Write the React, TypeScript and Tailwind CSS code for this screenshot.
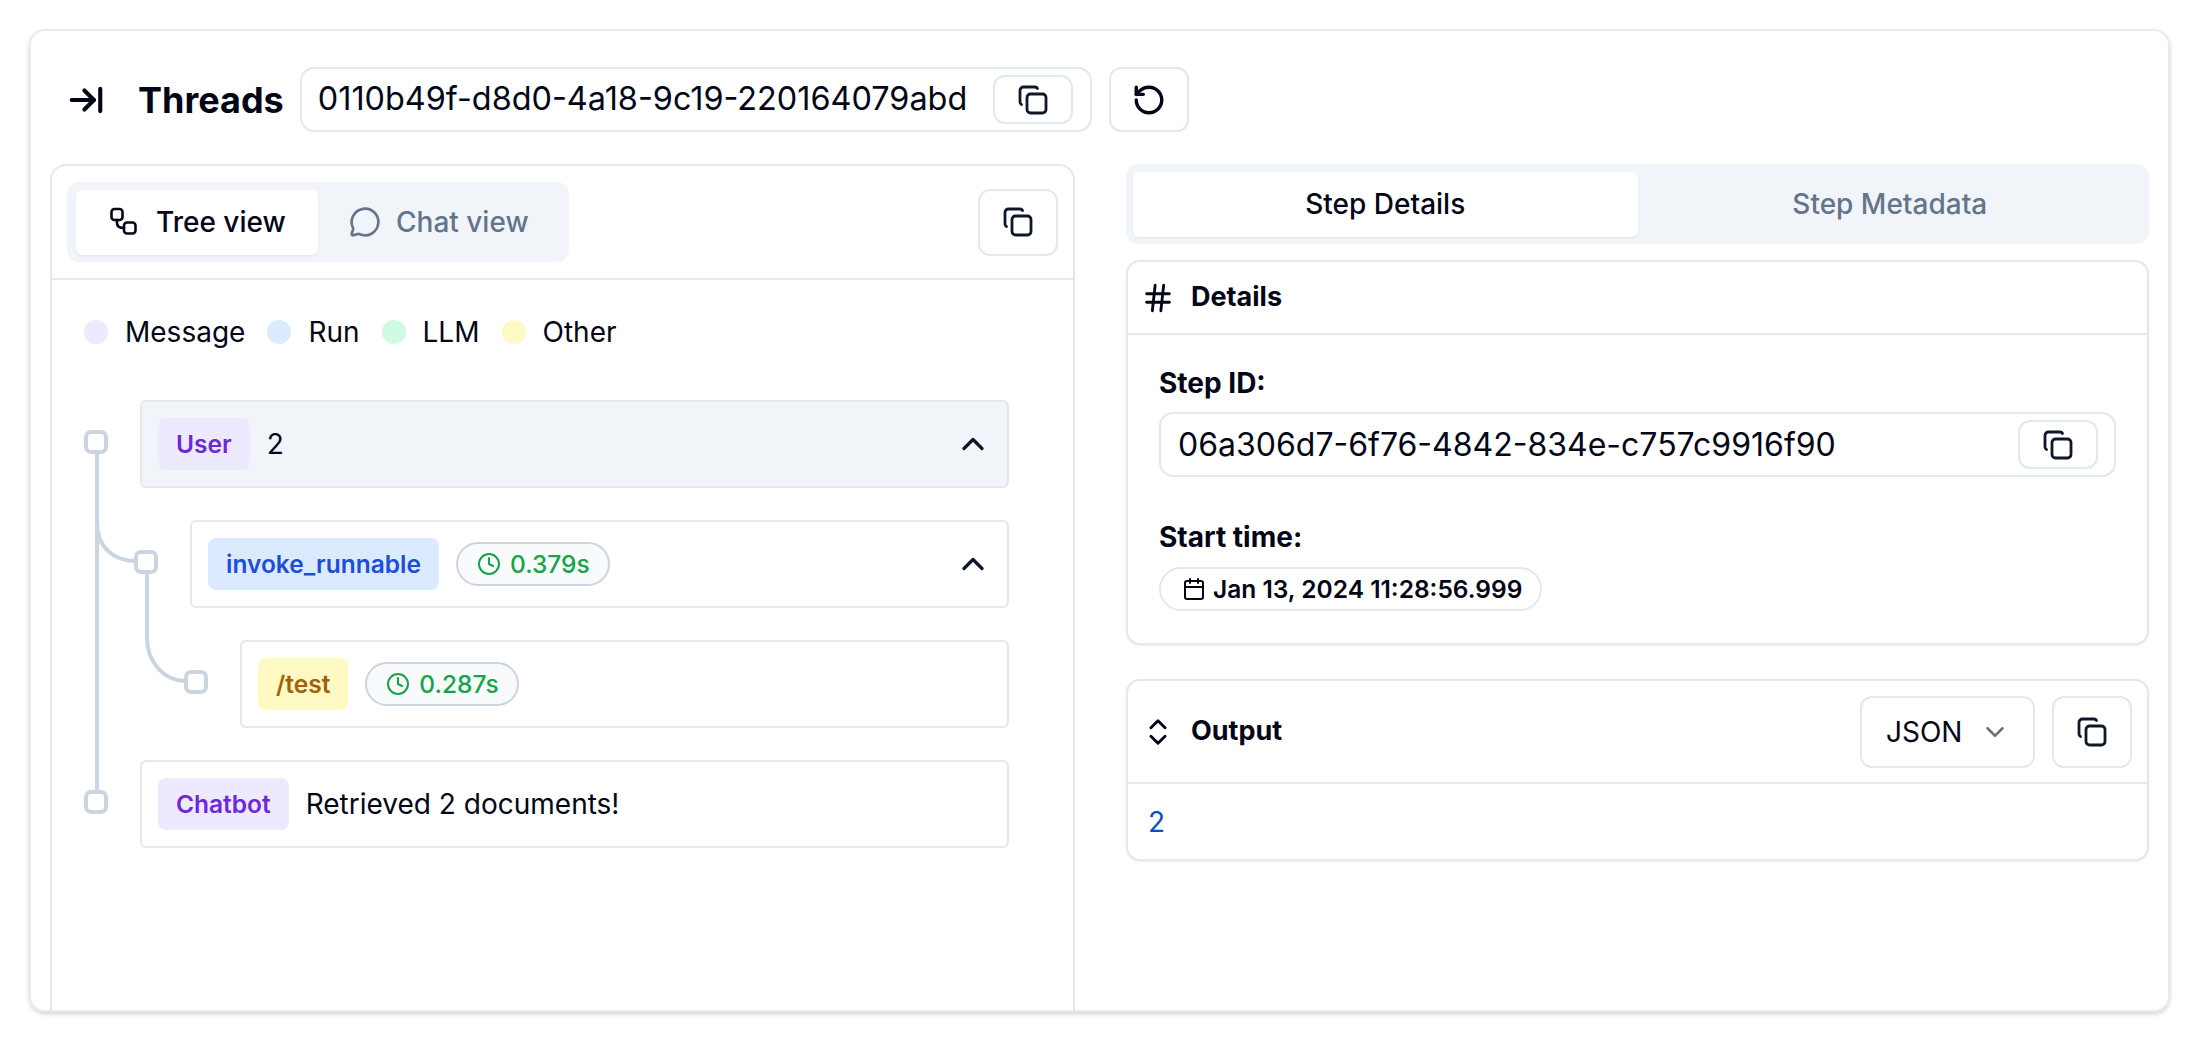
import { ChevronDown, ChevronUp, ChevronsUpDown, Calendar, Clock, Hash, MessageCircle, RotateCcw, ArrowRightToLine } from 'lucide-react';

function CopyIcon({ size = 32 }: { size?: number }) {
    return (
        <svg width={size} height={size} viewBox="0 0 32 32" fill="none" stroke="currentColor" strokeWidth="2.8" strokeLinecap="round" strokeLinejoin="round">
            <rect x="10" y="10" width="19" height="19" rx="3.5" />
            <path d="M4.5 20.5C3.5 20 3 19 3 18V6.5C3 4.5 4.5 3 6.5 3H18C19 3 20 3.500 20.500 4.500" />
        </svg>
    );
}

function TreeIcon() {
    return (
        <svg width="30" height="30" viewBox="0 0 30 30" fill="none" stroke="currentColor" strokeWidth="2.6" strokeLinecap="round" strokeLinejoin="round">
            <rect x="2.500" y="2" width="11" height="11" rx="3" />
            <rect x="15" y="15.500" width="11.500" height="11" rx="3" />
            <path d="M8 13v3c0 3 2 5 7 5" />
        </svg>
    );
}

function CopyButton({ className }: { className: string }) {
    return (
        <button className={`flex items-center justify-center rounded-[12px] border-2 border-[#e2e8f0] bg-white text-[#0f172a] ${className}`}>
            <CopyIcon />
        </button>
    );
}

function Legend({ color, label }: { color: string; label: string }) {
    return (
        <div className="flex items-center gap-[17px]">
            <span className={`h-[24px] w-[24px] rounded-full ${color}`} />
            <span>{label}</span>
        </div>
    );
}

function Badge({ className, children }: { className: string; children: string }) {
    return (
        <span className={`flex h-[52px] items-center rounded-[8px] px-[18px] text-[24.500px] font-semibold ${className}`}>
            {children}
        </span>
    );
}

function Duration({ value }: { value: string }) {
    return (
        <span className="flex h-[44px] items-center gap-[9px] rounded-full border-2 border-[#cbd5e1] bg-[#f8fafc] pl-[19px] pr-[18px] text-[24.500px] font-medium text-[#16a34a]">
            <Clock size={24} strokeWidth={2} />
            {value}
        </span>
    );
}

function TreeRow({ depth, active, chevron, children }: { depth: 0 | 1 | 2; active?: boolean; chevron?: boolean; children: React.ReactNode }) {
    const indent = depth === 0 ? 'pl-0' : depth === 1 ? 'pl-[50px]' : 'pl-[100px]';
    return (
        <div className={`flex items-center gap-[32px] ${indent}`}>
            <span className="relative -mt-[4px] h-[24px] w-[24px] shrink-0 rounded-[7px] border-[4px] border-[#cbd5e1] bg-white" />
            <div className={`flex h-[88px] flex-1 items-center gap-[17px] rounded-[6px] border-2 border-[#e5e7eb] px-[16px] ${active ? 'bg-[#f1f5f9]' : 'bg-white'}`}>
                {children}
                {chevron && <ChevronUp size={36} strokeWidth={2.200} className="ml-auto text-[#0f172a]" />}
            </div>
        </div>
    );
}

export default function App() {
    return (
        <div className="h-[1042px] bg-white pl-[29px] pr-[28px] pt-[29px] font-['Inter',sans-serif] text-[28px] text-[#020617]">
            <div className="flex h-[983px] flex-col overflow-hidden rounded-[16px] border-2 border-[#e8ebf0] shadow-[0_2px_4px_rgba(0,0,0,0.18)]">
                {/* top bar */}
                <div className="flex items-center pl-[36px] pt-[36px]">
                    <ArrowRightToLine size={38} strokeWidth={2.600} />
                    <h1 className="ml-[33px] text-[36px] font-bold">Threads</h1>
                    <div className="ml-[16px] flex h-[65px] w-[792px] items-center justify-between rounded-[14px] border-2 border-[#e2e8f0] pl-[16px] pr-[17px]">
                        <span className="text-[32.400px]">0110b49f-d8d0-4a18-9c19-220164079abd</span>
                        <CopyButton className="h-[49px] w-[80px]" />
                    </div>
                    <button className="ml-[17px] flex h-[65px] w-[80px] items-center justify-center rounded-[12px] border-2 border-[#e2e8f0]">
                        <RotateCcw size={34} strokeWidth={2.400} />
                    </button>
                </div>

                <div className="mt-[32px] flex min-h-0 flex-1 pl-[19px] pr-[19px]">
                    {/* left panel */}
                    <div className="flex w-[1025px] shrink-0 flex-col rounded-t-[16px] border-x-2 border-t-2 border-[#e2e8f0]">
                        <div className="flex h-[114px] items-center justify-between border-b-2 border-[#e2e8f0] pl-[15px] pr-[15px]">
                            <div className="flex h-[80px] items-center gap-0 rounded-[12px] bg-[#f1f5f9] pl-[9px] pr-[8px]">
                                <div className="flex h-[65px] w-[242px] items-center gap-[17px] rounded-[6px] bg-white pl-[33px] font-medium shadow-[0_1px_2px_rgba(15,23,42,0.08)]">
                                    <TreeIcon />
                                    Tree view
                                </div>
                                <div className="flex h-[65px] w-[243px] items-center gap-[15px] pl-[31px] font-medium text-[#64748b]">
                                    <MessageCircle size={32} strokeWidth={2} />
                                    Chat view
                                </div>
                            </div>
                            <CopyButton className="h-[67px] w-[80px]" />
                        </div>

                        <div className="flex items-center gap-[22px] pl-[32px] pt-[35px] leading-[34px]">
                            <Legend color="bg-[#ede9fe]" label="Message" />
                            <Legend color="bg-[#dbeafe]" label="Run" />
                            <Legend color="bg-[#d1fae5]" label="LLM" />
                            <Legend color="bg-[#fef9c3]" label="Other" />
                        </div>

                        <div className="relative mt-[51px] flex flex-col gap-[32px] pl-[32px] pr-[64px]">
                            <svg className="absolute left-0 top-0" width="170" height="420" fill="none" stroke="#cbd5e1" strokeWidth="4">
                                <path d="M45 50V400" />
                                <path d="M45 122C45 148 62 161 84 161" />
                                <path d="M95 172V238C95 262 112 281 134 281" />
                            </svg>
                            <TreeRow depth={0} active chevron>
                                <Badge className="bg-[#ede9fe] text-[#6d28d9]">User</Badge>
                                <span>2</span>
                            </TreeRow>
                            <TreeRow depth={1} chevron>
                                <Badge className="bg-[#dbeafe] text-[#1d4ed8]">invoke_runnable</Badge>
                                <Duration value="0.379s" />
                            </TreeRow>
                            <TreeRow depth={2}>
                                <Badge className="bg-[#fef9c3] text-[#a16207]">/test</Badge>
                                <Duration value="0.287s" />
                            </TreeRow>
                            <TreeRow depth={0}>
                                <Badge className="bg-[#ede9fe] text-[#6d28d9]">Chatbot</Badge>
                                <span>Retrieved 2 documents!</span>
                            </TreeRow>
                        </div>
                    </div>

                    {/* right panel */}
                    <div className="ml-[51px] flex flex-1 flex-col">
                        <div className="flex h-[80px] items-center rounded-[12px] bg-[#f1f5f9] px-[7px] font-medium">
                            <div className="flex h-[65px] flex-1 items-center justify-center rounded-[6px] bg-white shadow-[0_1px_2px_rgba(15,23,42,0.08)]">Step Details</div>
                            <div className="flex h-[65px] flex-1 items-center justify-center text-[#64748b]">Step Metadata</div>
                        </div>

                        <section className="mt-[16px] rounded-[14px] border-2 border-[#e2e8f0] shadow-[0_1px_2px_rgba(15,23,42,0.08)]">
                            <div className="flex h-[73px] items-center gap-[16px] border-b-2 border-[#e2e8f0] pl-[13px] text-[27px] font-bold">
                                <Hash size={34} strokeWidth={2} />
                                Details
                            </div>
                            <div className="pb-[32px] pl-[31px] pr-[31px] pt-[30px]">
                                <div className="text-[28px] font-bold leading-[36px]">Step ID:</div>
                                <div className="mt-[11px] flex h-[65px] items-center justify-between rounded-[14px] border-2 border-[#e2e8f0] pl-[17px] pr-[16px]">
                                    <span className="text-[32px]">06a306d7-6f76-4842-834e-c757c9916f90</span>
                                    <CopyButton className="h-[49px] w-[80px]" />
                                </div>
                                <div className="mt-[42px] text-[28px] font-bold leading-[36px]">Start time:</div>
                                <div className="mt-[12px] flex h-[44px] w-fit items-center gap-[7px] rounded-full border-2 border-[#e2e8f0] pl-[21px] pr-[18px] text-[24.500px] font-semibold">
                                    <Calendar size={24} strokeWidth={2} />
                                    Jan 13, 2024 11:28:56.999
                                </div>
                            </div>
                        </section>

                        <section className="mt-[34px] rounded-[14px] border-2 border-[#e2e8f0] shadow-[0_1px_2px_rgba(15,23,42,0.08)]">
                            <div className="flex h-[103px] items-center border-b-2 border-[#e2e8f0] pl-[13px] pr-[15px]">
                                <ChevronsUpDown size={34} strokeWidth={2} />
                                <span className="ml-[16px] text-[27px] font-bold">Output</span>
                                <div className="ml-auto flex h-[72px] w-[175px] items-center gap-[18px] rounded-[12px] border-2 border-[#e2e8f0] pl-[24px]">
                                    JSON
                                    <ChevronDown size={30} strokeWidth={2} className="text-[#71717a]" />
                                </div>
                                <CopyButton className="ml-[17px] h-[72px] w-[80px]" />
                            </div>
                            <div className="h-[75px] pl-[20px] pt-[21px] leading-[34px] text-[#0451c5]">2</div>
                        </section>
                    </div>
                </div>
            </div>
        </div>
    );
}
